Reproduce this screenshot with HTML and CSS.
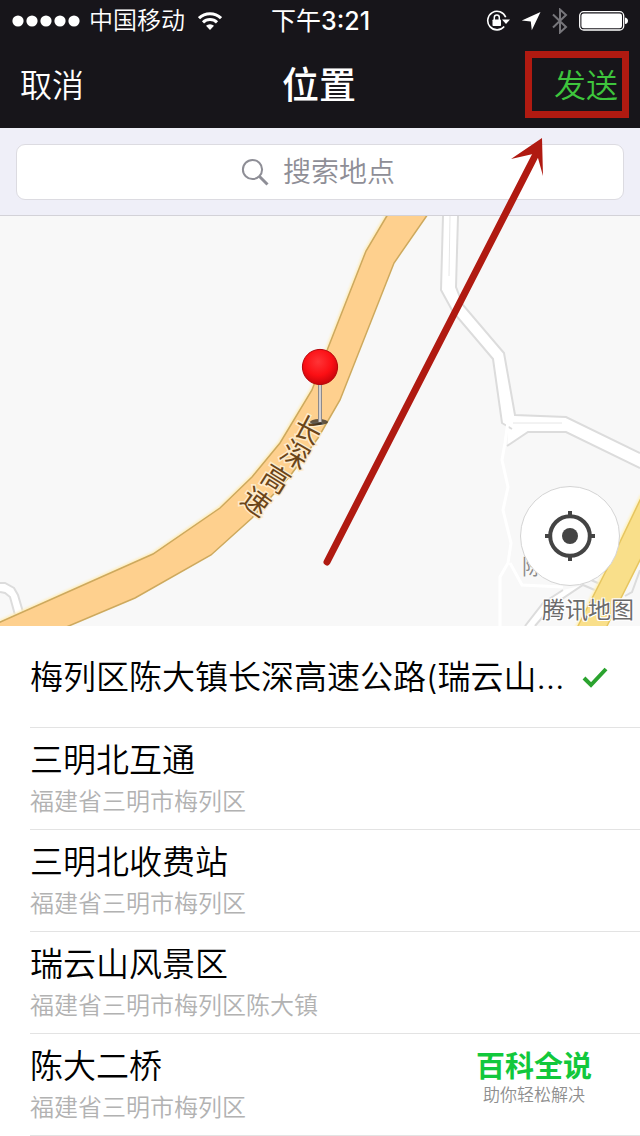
FILE: index.html
```html
<!DOCTYPE html>
<html lang="zh-CN">
<head>
    <meta charset="UTF-8">
    <meta name="viewport" content="width=device-width, initial-scale=1.0">
    <title>位置</title>
    <link rel="stylesheet" href="styles.css">
</head>
<body>
    <div class="app">
        <header class="header">
            <div class="status-bar">
                <div class="status-left">
                    <svg class="signal" width="68" height="12" viewBox="0 0 68 12" fill="#fff">
                        <circle cx="6" cy="6" r="5.6"/>
                        <circle cx="20" cy="6" r="5.6"/>
                        <circle cx="34" cy="6" r="5.6"/>
                        <circle cx="48" cy="6" r="5.6"/>
                        <circle cx="62" cy="6" r="5.6"/>
                    </svg>
                    <span class="carrier">中国移动</span>
                    <svg class="wifi" width="24" height="18" viewBox="0 0 24 18" fill="none" stroke="#fff" stroke-width="3">
                        <path d="M1 6.2a15.6 15.6 0 0 1 22 0"/>
                        <path d="M5 10.4a10 10 0 0 1 14 0"/>
                        <path d="M12 18l-4-4.2a5.8 5.8 0 0 1 8 0z" fill="#fff" stroke="none"/>
                    </svg>
                </div>
                <span class="time">下午<b>3:21</b></span>
                <div class="status-right">
                    <svg width="24" height="22" viewBox="0 0 24 22">
                        <path d="M19.7 7.2A9.3 9.3 0 1 0 18.2 16.5" fill="none" stroke="#fff" stroke-width="1.6"/>
                        <path d="M16 9.500h8l-4 4.500z" fill="#fff"/>
                        <rect x="6.5" y="9.5" width="8.5" height="6.500" rx="0.8" fill="#fff"/>
                        <path d="M8.3 10V7.600a2.5 2.5 0 0 1 5 0V10" fill="none" stroke="#fff" stroke-width="1.500"/>
                    </svg>
                    <svg width="20" height="20" viewBox="0 0 20 20">
                        <path d="M19.5 1L10.8 19.3 9.8 10.4 0.8 9.5z" fill="#fff"/>
                    </svg>
                    <svg width="16" height="26" viewBox="0 0 16 26">
                        <path d="M1 6.5l13 12.5-6 5.5v-23l6 5.5L1 19.5" fill="none" stroke="#77767b" stroke-width="2"/>
                    </svg>
                    <svg class="battery" width="50" height="20" viewBox="0 0 50 20">
                        <rect x="0.7" y="0.7" width="44" height="18.3" rx="4" fill="none" stroke="#fff" stroke-width="1.3"/>
                        <rect x="2.4" y="2.4" width="40.6" height="14.9" rx="2.4" fill="#fff"/>
                        <path d="M46 6.5c4 0.6 4 6 0 6.6z" fill="#fff"/>
                    </svg>
                </div>
            </div>
            <nav class="nav-bar">
                <button type="button" class="nav-btn cancel">取消</button>
                <h1>位置</h1>
                <button type="button" class="nav-btn send">发送</button>
            </nav>
        </header>

        <div class="search">
            <label class="search-box">
                <svg width="28" height="28" viewBox="0 0 28 28" fill="none" stroke="#8e8e96">
                    <circle cx="11.5" cy="11.5" r="9.6" stroke-width="2"/>
                    <path d="M18.5 18.5l8 8" stroke-width="3"/>
                </svg>
                <input type="text" class="search-input" placeholder="搜索地点" aria-label="搜索地点">
            </label>
        </div>

        <div class="map">
            <svg class="map-canvas" viewBox="0 0 640 410">
                <defs>
                    <radialGradient id="pinHead" cx="45%" cy="35%" r="65%">
                        <stop offset="0" stop-color="#ff3436"/>
                        <stop offset="0.6" stop-color="#fb0f14"/>
                        <stop offset="1" stop-color="#c8040a"/>
                    </radialGradient>
                </defs>
                <rect width="640" height="410" fill="#f8f8f8"/>

                <!-- small roads -->
                <g class="road-minor">
                    <path class="fill" d="M443 0L441 74 453 96 493 143 502 207 508 213 508 230 528 216 566 216 640 252V237L566 201 515 199 504 137 463 89 456 71 458 0z"/>
                    <path class="edge" d="M443 0L441 74 453 96 493 143 502 207 512 213"/>
                    <path class="edge" d="M458 0L456 71 463 89 504 137 515 199 566 201 640 237"/>
                    <path class="edge" d="M507 230L528 216 566 216 640 252"/>
                    <path class="edge thin" d="M513 207H562M450 0L449 60"/>
                    <path class="lane" d="M508 205L505 227 502 244 508 271 503 294 511 327 508 347 500 361V410M510 347L522 369 563 371"/>
                    <path class="fill" d="M525 410L543 387 563 374 583 369 553 389 535 410z"/>
                    <path class="edge" d="M525 410L543 387 563 374M535 410L553 389 583 369 597 375"/>
                    <path class="edge" d="M591 364L600 368M640 354L632 376 625 380"/>
                    <path class="fill" d="M0 367H5L14 372 18 379 23 396 15 399 10 381 5 377H0z"/>
                    <path class="edge" d="M0 367H5L14 372 18 379 23 396M0 376L5 377 10 381 15 399"/>
                </g>
                <text class="place" x="522" y="358">陈</text>

                <!-- expressway -->
                <path class="road-main" d="M388 -2L366 35 328 132 312 174 280 227 252 261 220 292 153 338 -2 407V412H64L135 382 211 339 252 302 290 260 318 222 340 184 394 47 428 -2z"/>
                <path class="road-second" d="M577 412L608 351 642 280V340L606 412z"/>

                <g class="road-name">
                    <text transform="translate(308 214) rotate(28)" y="10">长</text>
                    <text transform="translate(295 239) rotate(30)" y="10">深</text>
                    <text transform="translate(276 263) rotate(32)" y="10">高</text>
                    <text transform="translate(256 286) rotate(36)" y="10">速</text>
                </g>

                <!-- pin -->
                <ellipse cx="319" cy="206" rx="9" ry="3" fill="#2d2925" opacity="0.75"/>
                <rect x="318" y="166" width="4" height="40" fill="#8e8a8a"/>
                <rect x="319" y="166" width="2" height="40" fill="#d4d0d0"/>
                <circle cx="320" cy="151" r="17.6" fill="url(#pinHead)" stroke="#b3060a" stroke-width="1"/>
            </svg>
            <button type="button" class="locate" aria-label="定位">
                <svg width="52" height="52" viewBox="0 0 52 52" fill="none" stroke="#444" stroke-width="4">
                    <circle cx="26" cy="26" r="19.8"/>
                    <path d="M26 1v6M26 45v6M1 26h6M45 26h6"/>
                    <circle cx="26" cy="26" r="8" fill="#444" stroke="none"/>
                </svg>
            </button>
            <span class="map-brand">腾讯地图</span>
        </div>

        <ul class="places">
            <li>
                <button type="button" class="place-row selected">
                    <span class="name">梅列区陈大镇长深高速公路(瑞云山…</span>
                    <svg class="check" width="26" height="22" viewBox="0 0 26 22" fill="none" stroke="#2ba32f" stroke-width="4">
                        <path d="M2 12l7 7L24 3"/>
                    </svg>
                </button>
            </li>
            <li>
                <button type="button" class="place-row">
                    <span class="name">三明北互通</span>
                    <span class="address">福建省三明市梅列区</span>
                </button>
            </li>
            <li>
                <button type="button" class="place-row">
                    <span class="name">三明北收费站</span>
                    <span class="address">福建省三明市梅列区</span>
                </button>
            </li>
            <li>
                <button type="button" class="place-row">
                    <span class="name">瑞云山风景区</span>
                    <span class="address">福建省三明市梅列区陈大镇</span>
                </button>
            </li>
            <li>
                <button type="button" class="place-row">
                    <span class="name">陈大二桥</span>
                    <span class="address">福建省三明市梅列区</span>
                </button>
            </li>
        </ul>

        <!-- highlight round the send button, with its arrow -->
        <svg class="pointer" width="320" height="530" viewBox="320 50 320 530">
            <path d="M525 51H629V118H525zM532 58V111H622V58z" fill="#b01a11" fill-rule="evenodd"/>
            <path d="M327 562L535 156" stroke="#b01a11" stroke-width="7" stroke-linecap="round"/>
            <path d="M542 138L511 159 533 154 538 158 543 176z" fill="#b01a11"/>
        </svg>

        <div class="watermark">
            <strong>百科全说</strong>
            <span>助你轻松解决</span>
        </div>
    </div>
</body>
</html>
```

FILE: styles.css
```css
* {
    box-sizing: border-box;
}
body {
    margin: 0;
    background-color: #fff;
    color: #000;
    font-family: Inter, "Noto Sans CJK SC", sans-serif;
    font-weight: 350;
}
button {
    margin: 0;
    padding: 0;
    border: none;
    background: none;
    color: inherit;
    font: inherit;
    cursor: pointer;
}
svg {
    display: block;
    flex-shrink: 0;
}
.app {
    position: relative;
}

/* header */
.header {
    background-color: #17151a;
    color: #fff;
}
.status-bar {
    display: grid;
    grid-template-columns: 1fr auto 1fr;
    align-items: center;
    height: 42px;
    padding: 0 11px 0 12px;
    font-size: 24px;
    line-height: 40px;
}
.status-left {
    display: flex;
    align-items: center;
    gap: 9px;
}
.wifi {
    margin-left: 4px;
}
.time {
    font-size: 25px;
    font-weight: 400;
}
.time b {
    font-weight: 500;
}
.status-right {
    display: flex;
    align-items: center;
    justify-content: flex-end;
    gap: 11px;
}
.nav-bar {
    display: grid;
    grid-template-columns: 1fr auto 1fr;
    align-items: center;
    height: 86px;
    padding: 2px 22px 0 20px;
}
.nav-bar h1 {
    margin: 0;
    font-size: 37px;
    font-weight: 500;
    line-height: 48px;
}
.nav-btn {
    font-size: 32px;
    line-height: 48px;
}
.cancel {
    justify-self: start;
}
.send {
    justify-self: end;
    color: #3ec53d;
}

/* search */
.search {
    padding: 16px 16px 15px;
    background-color: #efeff8;
    border-bottom: 1px solid #d3d2d8;
}
.search-box {
    display: flex;
    align-items: center;
    justify-content: center;
    gap: 14px;
    height: 56px;
    border: 1px solid #dcdbe1;
    border-radius: 9px;
    background-color: #fff;
}
.search-input {
    width: 116px;
    padding: 0;
    border: none;
    outline: none;
    background: none;
    font: inherit;
    font-size: 28px;
    line-height: 40px;
}
.search-input::placeholder {
    color: #8e8e96;
    opacity: 1;
}

/* map */
.map {
    position: relative;
}
.map-canvas {
    width: 100%;
    height: auto;
}
.road-minor .fill {
    fill: #fff;
}
.road-minor .edge {
    fill: none;
    stroke: #dcdcdc;
    stroke-width: 2;
}
.road-minor .thin {
    stroke: #e6e6e6;
    stroke-width: 1;
}
.road-minor .lane {
    fill: none;
    stroke: #fff;
    stroke-width: 3;
}
.road-main {
    fill: #fed08e;
    stroke: #cda95e;
    stroke-width: 1.5;
    filter: drop-shadow(-1px -1px 1px #ffedb8);
}
.road-second {
    fill: #f9df8a;
    stroke: #e6c55f;
    stroke-width: 1.5;
    filter: drop-shadow(-1px -1px 1px #fff0b4);
}
.road-name {
    fill: #6b4519;
    stroke: #fdebcb;
    stroke-width: 3;
    paint-order: stroke;
    font-size: 28px;
    font-weight: 400;
    text-anchor: middle;
}
.place {
    fill: #8a8a8a;
    font-size: 22px;
}
.locate {
    position: absolute;
    right: 20px;
    bottom: 40px;
    display: flex;
    align-items: center;
    justify-content: center;
    width: 100px;
    height: 100px;
    border: 1px solid #d4d4d4;
    border-radius: 50%;
    background-color: #fff;
}
.map-brand {
    position: absolute;
    right: 6px;
    bottom: 2px;
    color: #6b6b6b;
    font-size: 23px;
    font-weight: 400;
    line-height: 28px;
    text-shadow: 1px 1px 0 #fff, -1px -1px 0 #fff, 1px -1px 0 #fff, -1px 1px 0 #fff;
}

/* place list */
.places {
    margin: 0;
    padding: 0 0 0 30px;
    list-style: none;
}
.places li {
    border-bottom: 1px solid #e3e3e3;
}
.place-row {
    display: flex;
    flex-direction: column;
    gap: 6px;
    width: 100%;
    min-height: 101px;
    padding: 12px 0 11px;
    text-align: left;
}
.place-row.selected {
    flex-direction: row;
    align-items: center;
    justify-content: space-between;
    padding-right: 32px;
}
.name {
    font-size: 33px;
    line-height: 40px;
    white-space: nowrap;
}
.address {
    color: #b2b2b2;
    font-size: 24px;
    line-height: 32px;
}

/* overlays */
.pointer {
    position: absolute;
    top: 50px;
    right: 0;
    pointer-events: none;
}
.watermark {
    position: absolute;
    right: 48px;
    bottom: 30px;
    display: flex;
    flex-direction: column;
    align-items: center;
    pointer-events: none;
}
.watermark strong {
    color: #12c83c;
    font-size: 29px;
    font-weight: 700;
    line-height: 34px;
}
.watermark span {
    color: #8f8f8f;
    font-size: 17px;
    line-height: 22px;
}
```
